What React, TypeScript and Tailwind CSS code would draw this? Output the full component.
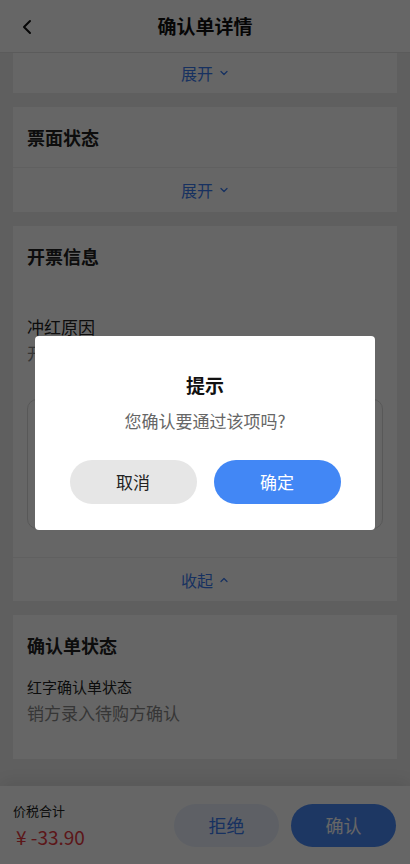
import React from 'react';

const Chevron: React.FC<{ up?: boolean }> = ({ up }) => (
  <svg width="10" height="10" viewBox="0 0 10 10" className="ml-[6px]" fill="none">
    <path
      d={up ? 'M2 6.5 L5 3.5 L8 6.5' : 'M2 3.5 L5 6.5 L8 3.5'}
      stroke="#3a7bf0"
      strokeWidth="1.3"
      strokeLinecap="round"
      strokeLinejoin="round"
    />
  </svg>
);

const ToggleRow: React.FC<{ label: string; up?: boolean; h: string }> = ({ label, up, h }) => (
  <div className={`flex items-center justify-center ${h} text-[16px] text-[#3a7bf0]`}>
    <span>{label}</span>
    <Chevron up={up} />
  </div>
);

const CardTitle: React.FC<{ children: React.ReactNode }> = ({ children }) => (
  <div className="flex h-[60px] items-center px-[14px] text-[18px] font-bold text-[#222]">{children}</div>
);

export default function App() {
  return (
    <div className="relative flex h-[864px] w-[410px] flex-col overflow-hidden bg-[#eeeeee] font-['Noto_Sans_CJK_SC',sans-serif]">
      {/* header */}
      <div className="relative flex h-[53px] shrink-0 items-center justify-center border-b border-[#e4e4e4] bg-white">
        <svg width="14" height="16" viewBox="0 0 14 16" className="absolute left-[20px] top-[19px]" fill="none">
          <path d="M10 2 L4 8 L10 14" stroke="#111" strokeWidth="2" strokeLinecap="round" strokeLinejoin="round" />
        </svg>
        <span className="text-[19px] font-bold text-[#111]">确认单详情</span>
      </div>

      {/* content */}
      <div className="flex flex-1 flex-col gap-[14px] px-[13px]">
        <div className="bg-white">
          <ToggleRow label="展开" h="h-[40px]" />
        </div>

        <div className="bg-white">
          <CardTitle>票面状态</CardTitle>
          <div className="h-px bg-[#f0f0f0]" />
          <ToggleRow label="展开" h="h-[44px]" />
        </div>

        <div className="bg-white">
          <CardTitle>开票信息</CardTitle>
          <div className="px-[14px] pt-[29px]">
            <div className="text-[17px] leading-[24px] text-[#222]">冲红原因</div>
            <div className="mt-[2px] text-[17px] leading-[24px] text-[#888]">开票有误</div>
            <div className="mt-[34px] h-[130px] rounded-[10px] border border-[#dcdcdc]" />
          </div>
          <div className="mt-[28px] h-px bg-[#f0f0f0]" />
          <ToggleRow label="收起" up h="h-[43px]" />
        </div>

        <div className="h-[144px] bg-white">
          <CardTitle>确认单状态</CardTitle>
          <div className="px-[14px] pt-[2px]">
            <div className="text-[15px] leading-[20px] text-[#222]">红字确认单状态</div>
            <div className="mt-[4px] text-[17px] leading-[24px] text-[#888]">销方录入待购方确认</div>
          </div>
        </div>
      </div>

      {/* bottom bar */}
      <div className="flex h-[78px] shrink-0 items-center bg-white px-[13px] shadow-[0_-6px_16px_rgba(0,0,0,0.08)]">
        <div className="flex flex-1 flex-col">
          <span className="text-[13px] leading-[18px] text-[#222]">价税合计</span>
          <span className="mt-[5px] pl-[3px] text-[19px] leading-[24px] text-[#e6393f]">¥ -33.90</span>
        </div>
        <button className="h-[43px] w-[105px] rounded-full bg-[#eaf1fd] text-[18px] text-[#3a7bf0]">拒绝</button>
        <button className="ml-[12px] mr-px h-[43px] w-[105px] rounded-full bg-[#4a8af7] text-[18px] text-white">确认</button>
      </div>

      {/* mask */}
      <div className="absolute inset-0 bg-black/60" />

      {/* dialog */}
      <div className="absolute left-[35px] top-[336px] flex h-[194px] w-[340px] flex-col items-center rounded-[4px] bg-white pt-[36px]">
        <div className="text-[19px] font-bold leading-[26px] text-[#111]">提示</div>
        <div className="mt-[11px] text-[17px] leading-[24px] text-[#666]">您确认要通过该项吗?</div>
        <div className="mt-[27px] flex gap-[17px]">
          <button className="h-[44px] w-[127px] rounded-full bg-[#e6e6e6] text-[17px] text-[#222]">取消</button>
          <button className="h-[44px] w-[127px] rounded-full bg-[#4287f5] text-[17px] text-white">确定</button>
        </div>
      </div>
    </div>
  );
}
